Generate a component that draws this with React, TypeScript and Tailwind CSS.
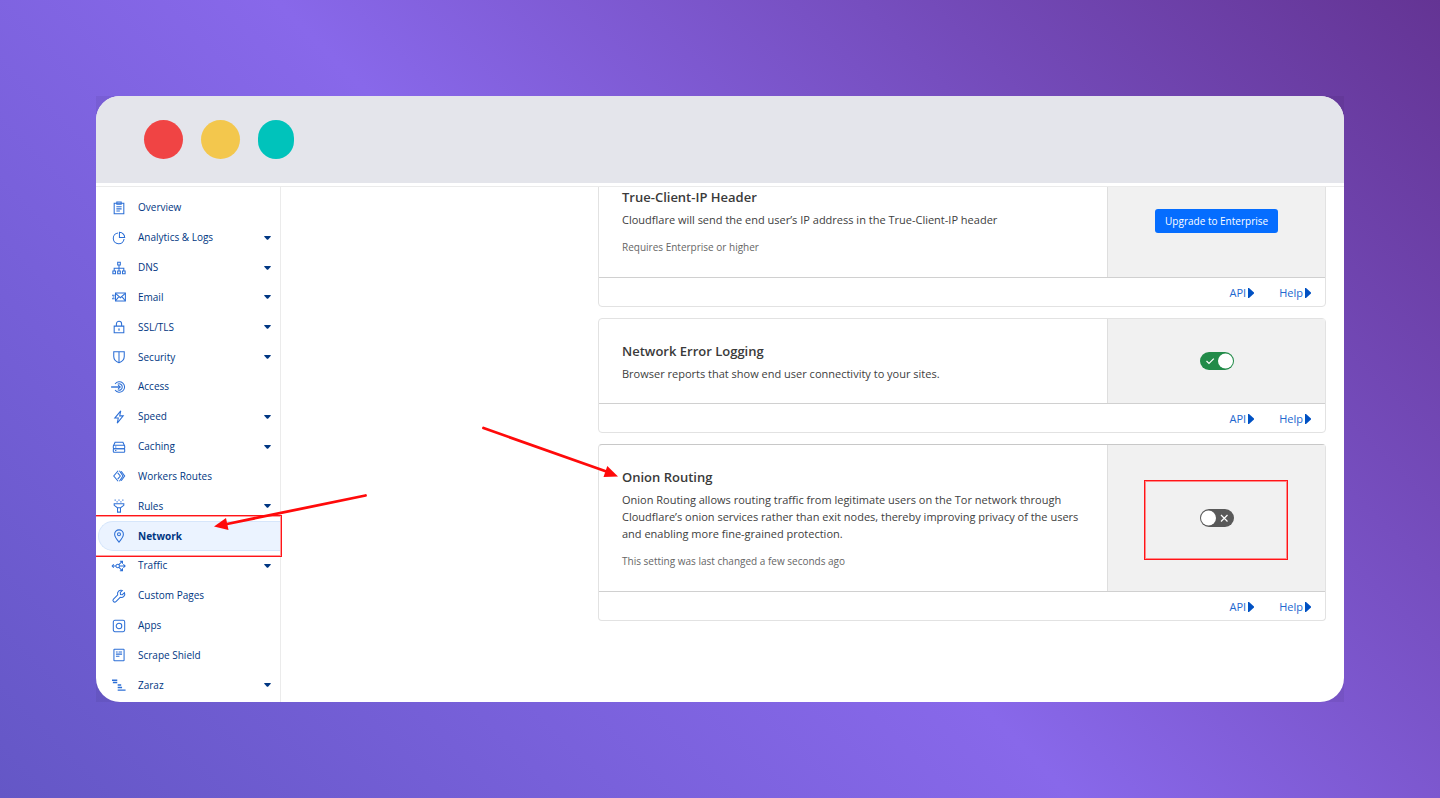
import type { ReactNode } from "react";
import { clsx } from "clsx";

const icons: Record<string, ReactNode> = {
  overview: (
    <>
      <path d="M2.5 2.5h11v12h-11z" />
      <path d="M5.5 1.2h5v2.6h-5zM5 6.5h6M5 9h6M5 11.5h4" />
    </>
  ),
  analytics: (
    <>
      <path d="M6.8 2.2a6.2 6.2 0 1 0 7 7" />
      <path d="M8.5 1.5v6h6a6 6 0 0 0-6-6z" />
    </>
  ),
  dns: (
    <>
      <path d="M6.5 1.5h3v3h-3zM1 11.5h3v3H1zM6.5 11.5h3v3h-3zM12 11.5h3v3h-3z" />
      <path d="M8 4.5v7M2.5 11.5V8.3h11v3.2" />
    </>
  ),
  email: (
    <>
      <path d="M4 3.5h11.3v9H4z" />
      <path d="m4 3.8 5.6 5 5.6-5M4.2 12.3l3.6-4.8M15.1 12.3l-3.7-4.8M0 6h3M.8 8h2M0 10h3" />
    </>
  ),
  lock: (
    <>
      <path d="M2.5 7h11v7.5h-11zM5 7V4.5a3 3 0 0 1 6 0V7" />
      <path d="M8 10v2.2M7.2 10.3h1.6" />
    </>
  ),
  shield: <path d="M2 2h12v5.5c0 3.5-2.3 5.8-6 7-3.7-1.2-6-3.5-6-7zM8 2v12.5" />,
  access: (
    <>
      <path d="M3.5 4.5a6 6 0 1 1 0 7M6.5 4.8a3.6 3.6 0 1 1 0 6.4" />
      <path strokeWidth="1.6" d="M-1 8H9" />
      <path d="M7 5.8 9.5 8 7 10.2" />
    </>
  ),
  speed: <path d="M10 1 3.2 9.2h4L6 15l6.8-8.3h-4z" />,
  caching: (
    <>
      <rect x="1.5" y="6" width="13" height="4" rx=".8" />
      <rect x="1.5" y="10" width="13" height="4" rx=".8" />
      <path d="M2 6 3.5 2.5h9L14 6M3.5 8H5M3.5 12H5" />
    </>
  ),
  workers: (
    <>
      <path d="M7 2 2 8l5 6" />
      <path d="m6.5 4.5 3 3.5-3 3.5M8.5 2l4 6-4 6M10.5 2.5l4 5.5-4 5.5" />
    </>
  ),
  rules: (
    <>
      <path d="M2.5 5.5h11v1.7L9.7 10v5H6.3v-5L2.5 7.2zM6.3 10h3.4" />
      <path strokeWidth="1.5" d="M3 1.2h1.2M7.4 1.2h1.2M11.8 1.2H13M5.2 3.3h1.2M9.6 3.3h1.2" />
    </>
  ),
  network: (
    <>
      <path d="M8 15C5 11.5 3 9 3 6a5 5 0 0 1 10 0c0 3-2 5.5-5 9z" />
      <circle cx="8" cy="6" r="1.7" />
    </>
  ),
  traffic: (
    <>
      <circle cx="6.5" cy="8" r="2" />
      <path d="M0 8h4.5M2 6 .2 8 2 10M8.5 8H15M13 6l2 2-2 2M7.8 6.5 11.5 3M9 2.5h3v3M7.8 9.5l3.7 3.5M9 13.5h3v-3" />
    </>
  ),
  wrench: (
    <path d="M14.3 4.2 11.8 6.5 9.7 6.2 9.5 4l2.3-2.3a4 4 0 0 0-5.3 5L1.7 11.5a1.7 1.7 0 0 0 2.8 2.8L9.3 9.5a4 4 0 0 0 5-5.3z" />
  ),
  apps: (
    <>
      <rect x="1.5" y="1.5" width="13" height="13" rx="1.8" />
      <circle cx="8" cy="8" r="3.2" />
    </>
  ),
  scrape: (
    <>
      <rect x="2.2" y="1.5" width="11.6" height="13" rx=".6" />
      <path d="M4.5 4.5h2M7.5 4.5h4M4.5 7h7M4.5 9.5h4" />
    </>
  ),
  zaraz: <path strokeWidth="1.6" d="M0 2.5h6M1 5.2h5M6.5 8h4M6.5 10.8h5M6.5 13.8h9" />,
};

const navItems = [
  { label: "Overview", icon: "overview" },
  { label: "Analytics & Logs", icon: "analytics", menu: true },
  { label: "DNS", icon: "dns", menu: true },
  { label: "Email", icon: "email", menu: true },
  { label: "SSL/TLS", icon: "lock", menu: true },
  { label: "Security", icon: "shield", menu: true },
  { label: "Access", icon: "access" },
  { label: "Speed", icon: "speed", menu: true },
  { label: "Caching", icon: "caching", menu: true },
  { label: "Workers Routes", icon: "workers" },
  { label: "Rules", icon: "rules", menu: true },
  { label: "Network", icon: "network", active: true },
  { label: "Traffic", icon: "traffic", menu: true },
  { label: "Custom Pages", icon: "wrench" },
  { label: "Apps", icon: "apps" },
  { label: "Scrape Shield", icon: "scrape" },
  { label: "Zaraz", icon: "zaraz", menu: true },
];

const NavIcon = ({ name }: { name: string }) => (
  <svg viewBox="0 0 16 16" className="w-[14px] h-[14px] shrink-0 overflow-visible" fill="none" stroke="#2c6fd6" strokeWidth="1.2" aria-hidden="true">
    {icons[name]}
  </svg>
);

const Sidebar = () => (
  <nav className="w-[185px] shrink-0 border-r border-[#ebebeb] pt-[6px] pb-[2px]">
    <ul className="flex h-full flex-col">
      {navItems.map((item) => (
        <li key={item.label} className="relative flex-1">
          <a
            href="#"
            className={clsx(
              "ml-[2px] flex h-full items-center rounded-l-full pr-[9px] text-[10px] text-[#003682]",
              item.active ? "border border-r-0 border-[#d6e6fb] bg-[#ebf3ff] pl-[13px] font-bold" : "pl-[14px]"
            )}
          >
            <NavIcon name={item.icon} />
            <span className="ml-[12px] flex-1">{item.label}</span>
            {item.menu && (
              <svg viewBox="0 0 7 4" className="h-[4px] w-[7px]" fill="#003682" aria-hidden="true">
                <path d="M.3 0h6.4v.8L4 3.8H3L.3.8z" />
              </svg>
            )}
          </a>
          {item.active && (
            <>
              <div className="absolute -top-[6px] -left-[2px] z-10 h-[42px] w-[188px] border border-[#ff1418] inset-ring inset-ring-[#ff9a9a]" />
              {/* Arrow to the active item */}
              <svg viewBox="0 0 156 38" className="absolute -top-[28px] left-[117px] z-20 h-[38px] w-[156px]" aria-hidden="true">
                <path d="M152.500 2.500 14 31" stroke="#ff0a0a" strokeWidth="2.800" strokeLinecap="round" />
                <path d="M1 33.500 13 25l2.500 12z" fill="#ff0a0a" />
              </svg>
            </>
          )}
        </li>
      ))}
    </ul>
  </nav>
);

const FooterLink = ({ label }: { label: string }) => (
  <a href="#" className="flex items-center gap-[2px] text-[11px] text-[#2267cf]">
    {label}
    <svg viewBox="0 0 6 10" className="h-[10px] w-[6px]" fill="#0051c3" aria-hidden="true">
      <path d="M0 0h1l5 4.500v1L1 10H0z" />
    </svg>
  </a>
);

const Toggle = ({ label, on }: { label: string; on?: boolean }) => (
  <label className="relative block h-[18px] w-[34px]">
    <input
      type="checkbox"
      defaultChecked={on}
      aria-label={label}
      className="block h-full w-full appearance-none rounded-full bg-[#595959] checked:bg-[#228b49]"
    />
    <svg viewBox="0 0 34 18" className="absolute inset-0 h-full w-full" fill="none" stroke="#fff" strokeWidth="1.2" aria-hidden="true">
      <circle cx={on ? 25.5 : 8.5} cy="9" r="7.5" fill="#fff" stroke="none" />
      {on ? <path d="m6.5 9 2.500 2.500 4.800-4.800" /> : <path d="m21 6 6.500 6.500M27.500 6 21 12.500" />}
    </svg>
  </label>
);

type CardProps = {
  title: string;
  text: string;
  note?: string;
  strong?: boolean;
  pointer?: ReactNode;
  children: ReactNode;
};

const SettingCard = ({ title, text, note, strong, pointer, children }: CardProps) => (
  <section className={clsx("rounded-[4px] border border-[#e2e2e2]", strong && "border-t-[#c8c8c8]")}>
    <div className="flex">
      <div className="relative flex-1 px-[23px] pt-[22px] pb-[21px]">
        <h2 className="text-[13px] leading-[20px] font-semibold text-[#3a3a3a]">{title}</h2>
        <p className="mt-[4px] text-[11px] leading-[17px] text-[#404040]">{text}</p>
        {note && <p className="mt-[11px] text-[10px] leading-[17px] text-[#666]">{note}</p>}
        {pointer}
      </div>
      <div className="flex w-[30%] items-center justify-center border-l border-[#dedede] bg-[#f1f1f1]">{children}</div>
    </div>
    <div className="flex h-[29px] items-center justify-end gap-[25px] border-t border-[#d0d0d0] pt-[2px] pr-[14px]">
      <FooterLink label="API" />
      <FooterLink label="Help" />
    </div>
  </section>
);

const App = () => {
  return (
    <div className="h-screen bg-[linear-gradient(45deg,#6457c6_0%,#8868ea_48%,#643494_100%)] p-24 font-['Open_Sans','Noto_Sans',sans-serif]">
      <div className="h-full bg-black/5">
        <div className="flex h-full flex-col overflow-hidden rounded-3xl bg-white">
          {/* Title bar */}
          <header className="flex h-[87px] shrink-0 items-center gap-[18px] bg-[#e4e5eb] pl-12">
            <span className="h-[39px] w-[39px] rounded-full bg-[#f04444]" />
            <span className="h-[39px] w-[39px] rounded-full bg-[#f3c74d]" />
            <span className="h-[39px] w-[36px] rounded-[18px] bg-[#00c3bb]" />
          </header>

          <div className="mt-[3px] flex min-h-0 flex-1 border-t border-[#ebebeb]">
            <Sidebar />

            {/* Settings, scrolled part way down */}
            <main className="flex-1 overflow-hidden pr-[18px] pl-[317px]">
              <div className="-mt-[23px] flex flex-col gap-[11px]">
                <SettingCard
                  title="True-Client-IP Header"
                  text="Cloudflare will send the end user’s IP address in the True-Client-IP header"
                  note="Requires Enterprise or higher"
                >
                  <button className="h-[24px] rounded-[3px] bg-[#056dff] px-[10px] text-[10px] text-white">
                    Upgrade to Enterprise
                  </button>
                </SettingCard>

                <SettingCard title="Network Error Logging" text="Browser reports that show end user connectivity to your sites.">
                  <Toggle label="Network Error Logging" on />
                </SettingCard>

                <SettingCard
                  title="Onion Routing"
                  text="Onion Routing allows routing traffic from legitimate users on the Tor network through Cloudflare’s onion services rather than exit nodes, thereby improving privacy of the users and enabling more fine-grained protection."
                  note="This setting was last changed a few seconds ago"
                  strong
                  pointer={
                    <svg viewBox="0 0 138 54" className="absolute top-[-20px] left-[-118px] h-[54px] w-[138px]" aria-hidden="true">
                      <path d="M2.500 3 124 46" stroke="#ff0a0a" strokeWidth="2.800" strokeLinecap="round" />
                      <path d="M137 51.500 122.500 52l3.800-11z" fill="#ff0a0a" />
                    </svg>
                  }
                >
                  <div className="relative">
                    <div className="absolute -top-[29px] -left-[56px] h-[80px] w-[144px] border border-[#ff1418] inset-ring inset-ring-[#ff8a8a]" />
                    <Toggle label="Onion Routing" />
                  </div>
                </SettingCard>
              </div>
            </main>
          </div>
        </div>
      </div>
    </div>
  );
};

export default App;
